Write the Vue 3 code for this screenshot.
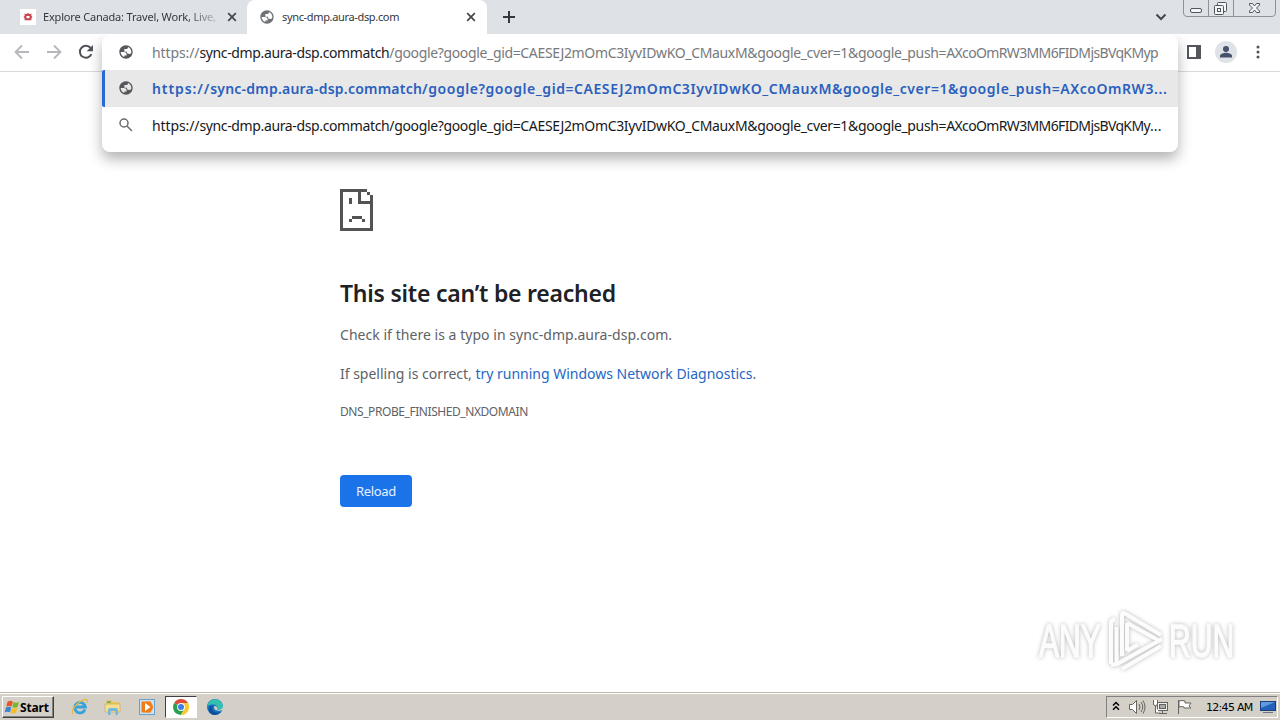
<template>
    <div class="screen">
        <header class="tab-strip">
            <div class="tab idle">
                <svg class="favicon" viewBox="0 0 16 16">
                    <rect width="16" height="16" fill="#fff" />
                    <path d="M8 4l1.500 1 2-.2-.2 2L12.500 8l-1.200 1.400.2 1.800H4.500l.2-1.800L3.500 8l1.200-1.200-.2-2 2 .2z" fill="#c94753" />
                    <rect x="6.500" y="7" width="3" height="2.200" fill="#fff" />
                </svg>
                <span class="tab-title fade">Explore Canada: Travel, Work, Live,</span>
                <svg class="close" viewBox="0 0 10 10"><path d="M1.200 1.200l7.600 7.600M8.800 1.200L1.200 8.800" /></svg>
            </div>
            <div class="tab active">
                <svg class="globe" viewBox="0 0 24 24"><path :d="globePath" fill="#6f7276" /></svg>
                <span class="tab-title">sync-dmp.aura-dsp.com</span>
                <svg class="close" viewBox="0 0 10 10"><path d="M1.200 1.200l7.600 7.600M8.800 1.200L1.200 8.800" /></svg>
            </div>
            <svg class="new-tab" viewBox="0 0 12 12"><path d="M6 0v12M0 6h12" /></svg>
            <svg class="tab-search" viewBox="0 0 12 8"><path d="M1.500 1.500L6 6l4.500-4.500" /></svg>
            <svg class="win-buttons" viewBox="0 0 94 18">
                <path d="M.5 0v13q0 3.500 3.500 3.500h85q3.500 0 3.500-3.500V0M25.500 0v16M50.500 0v16" fill="none" stroke="#8e939b" />
                <g fill="#f4f5f7" stroke="#50555e">
                    <rect x="7.500" y="8.500" width="11" height="4" rx="1.500" />
                    <rect x="34.500" y="2.500" width="9" height="9" rx="1" />
                    <rect x="31.500" y="5.500" width="9" height="9" rx="1" />
                    <rect x="34.500" y="8.500" width="3" height="3" />
                    <path d="M66.500 3.500h3l2 2.500 2-2.500h3v1.500l-3 3 3 3v1.500h-3l-2-2.500-2 2.500h-3v-1.500l3-3-3-3z" />
                </g>
            </svg>
        </header>

        <div class="toolbar">
            <svg class="nav back" viewBox="0 0 16 16"><path d="M15 8H2M8 1.500L1.500 8 8 14.500" /></svg>
            <svg class="nav forward" viewBox="0 0 16 16"><path d="M1 8h13M8 1.500L14.500 8 8 14.500" /></svg>
            <svg class="nav reload" viewBox="0 0 16 16">
                <path d="M13.400 10.200A6 6 0 1 1 12.600 4" />
                <path class="solid" d="M15 1v6.300H8.700z" />
            </svg>
            <div class="right-tools">
                <svg class="side-panel" viewBox="0 0 14 14"><path d="M0 0h14v14H0zM2 2v10h7V2z" fill="#53565a" fill-rule="evenodd" /></svg>
                <svg class="profile" viewBox="0 0 22 22">
                    <circle cx="11" cy="11" r="11" fill="#dfe2e7" />
                    <circle cx="11" cy="8" r="3" fill="#47516b" />
                    <path d="M5 16.500v-1.700c0-2 4-3 6-3s6 1 6 3v1.700z" fill="#47516b" />
                </svg>
                <svg class="menu" viewBox="0 0 4 14">
                    <circle cx="2" cy="2" r="1.500" /><circle cx="2" cy="7" r="1.500" /><circle cx="2" cy="12" r="1.500" />
                </svg>
            </div>
        </div>

        <div class="omnibox">
            <div class="row input">
                <svg class="globe" viewBox="0 0 24 24"><path :d="globePath" fill="#54575b" /></svg>
                <span class="url dim"><i>https://</i><b>{{ host }}</b>{{ path }}<em>{{ token }}MM6FIDMjsBVqKMyp</em></span>
            </div>
            <div class="row selected">
                <svg class="globe" viewBox="0 0 24 24"><path :d="globePath" fill="#54575b" /></svg>
                <span class="url strong"><i>https://</i><b>{{ host }}</b>{{ path }}{{ token }}...</span>
            </div>
            <div class="row">
                <svg class="globe lens" viewBox="0 0 16 16"><circle cx="6" cy="6" r="4" /><path d="M9 9l5 5" /></svg>
                <span class="url plain"><i>https://</i><b>{{ host }}</b>{{ path }}<em>{{ token }}MM6FIDMjsBVqKMy</em><u>...</u></span>
            </div>
        </div>

        <main class="page">
            <svg class="sad-page" viewBox="0 0 33 42" shape-rendering="crispEdges">
                <path d="M0 0h27v3H3v36h27V15h3v27H0z" />
                <path d="M18 0h3v12h12v3H18zM27 3h3v3h-3zM30 6h3v9h-3zM9 9h3v6H9zM12 27h10v3H12zM9 30h3v3H9zM22 30h3v3h-3z" />
            </svg>
            <h1>This site can’t be reached</h1>
            <p class="hint">Check if there is a typo in sync-dmp.aura-dsp.com.</p>
            <p class="diagnose">If spelling is correct, <a>try running Windows Network Diagnostics</a>.</p>
            <p class="code">DNS_PROBE_FINISHED_NXDOMAIN</p>
            <button>Reload</button>
        </main>

        <div class="watermark">
            <span>ANY</span>
            <svg viewBox="0 0 58 64">
                <path d="M8 10.500q-4 0-4 3.500v41M9.500 18v36" />
                <path d="M15 47V6q0-3 3-1.500L54 26M20 14v28M20 14l31 17M20 42l11-6.500" />
                <path d="M4 56l6-1 45-25M15 60l39-23" />
            </svg>
            <span>RUN</span>
        </div>

        <footer class="taskbar">
            <div class="start">
                <svg viewBox="0 0 18 16">
                    <path d="M4 2q3-2 6 0L8.500 7.500q-3-1.500-6 0z" fill="#e8572a" />
                    <path d="M10.800 2.500q3 1.500 6 0L15.300 8q-3 1.500-6 0z" fill="#76b82a" />
                    <path d="M2.200 8.500q3-1.500 6 0L6.800 14q-3-1.500-6 0z" fill="#3c83d4" />
                    <path d="M9 9q3 1.500 6 0l-1.500 5.500q-3 1.500-6 0z" fill="#f7bd23" />
                </svg>
                <span>Start</span>
            </div>
            <svg class="app ie" viewBox="0 0 18 18">
                <path d="M14 11.500A5.300 5.300 0 1 1 14.300 9H5" fill="none" stroke="#35a2de" stroke-width="2.800" />
                <path d="M2 16C-1 14 5 5 12 2c4-1.500 5 0 4 3" fill="none" stroke="#e8b73c" stroke-width="1.300" />
            </svg>
            <svg class="app explorer" viewBox="0 0 18 18">
                <path d="M2 4l1-2h5l1 2h7v9H2z" fill="#e9c862" />
                <path d="M1 6h15v8H1z" fill="#f6df91" stroke="#c9a54b" stroke-width=".6" />
                <path d="M4 17v-5q0-2 2-2h6q2 0 2 2v5h-2.500v-4h-5v4z" fill="#72b7df" />
                <path d="M3 4h4" stroke="#5aa768" stroke-width="1.500" />
            </svg>
            <svg class="app player" viewBox="0 0 18 18">
                <rect x="1.500" y="1.500" width="15" height="15" fill="#cce3f4" stroke="#68a1cc" />
                <rect x="3.500" y="3.500" width="9.500" height="11" fill="#f07d18" />
                <circle cx="9.500" cy="9" r="5.500" fill="#f07d18" />
                <path d="M7 5v8l5.500-4z" fill="#fff" />
            </svg>
            <div class="app-open">
                <svg viewBox="0 0 16 16">
                    <path d="M8 8L1.100 4A8 8 0 0 1 15 4.100H8z" fill="#e04a3a" />
                    <path d="M8 8L1.100 4A8 8 0 0 0 7.800 16l3.700-6z" fill="#2b9f50" />
                    <path d="M8 4.100h7A8 8 0 0 1 7.800 16l3.700-6z" fill="#f8c82c" />
                    <circle cx="8" cy="8" r="3.900" fill="#fff" />
                    <circle cx="8" cy="8" r="3" fill="#3e7de5" />
                </svg>
            </div>
            <svg class="app edge" viewBox="0 0 18 18">
                <circle cx="9" cy="9" r="8" fill="#1676c5" />
                <path d="M1.200 8a8 8 0 0 1 15.700-.5c.8 4-3 5.500-6 4 1.200-2.500-.3-5-3.500-5C4.500 6.500 2 7 1.200 8z" fill="#35bfb0" />
                <path d="M7 7.500c-2 3 0 8.500 7.500 6.500-3 4-10 4-11.500-1C2 9.500 4.500 7 7 7.500z" fill="#124f9b" />
                <path d="M8.500 8c-1.500 3 1.500 5.500 6.500 4.500l2.500-.5-.5-3c-1 2.500-4 3.500-6 2.500.8-1.500 0-3.500-2.500-3.500z" fill="#d4d0c8" />
            </svg>

            <div class="tray">
                <svg class="chevrons" viewBox="0 0 8 10"><path d="M1 4.500l3-3 3 3M1 8.800l3-3 3 3" /></svg>
                <svg class="speaker" viewBox="0 0 18 16">
                    <path d="M1.500 5.500h3l4-4v13l-4-4h-3z" fill="#fff" />
                    <path d="M11 5q2 3 0 6M13 3q3.500 5 0 10M15 1.500q4 6.500 0 13" fill="none" />
                </svg>
                <svg class="network" viewBox="0 0 18 16">
                    <rect x="5.500" y="3.500" width="10" height="8" fill="#eee" />
                    <rect x="7.500" y="5.500" width="6" height="4" fill="#aaa" />
                    <path d="M7 14.500h8M10.500 12v2M1.500 1v4q0 1.500 2 1.500t2-1.500V1M3.500 7v7h4" fill="#fff" />
                </svg>
                <svg class="flag" viewBox="0 0 18 16">
                    <path d="M2.500 1v14M3 2q3-1 6 0v2h6l-2 3 2 2H8V8Q6 7 3 8z" fill="#fff" />
                </svg>
                <span class="clock">12:45 AM</span>
                <svg class="desktop" viewBox="0 0 16 14">
                    <rect x=".5" y="1.500" width="15" height="9" fill="#245fba" stroke="#183f7d" />
                    <path d="M1 2h14L1 8z" fill="#609be0" />
                    <path d="M3 12.500h10" stroke="#6b7585" />
                </svg>
            </div>
        </footer>
    </div>
</template>

<script setup>
const host = 'sync-dmp.aura-dsp.commatch'
const path = '/google?google_gid=CAESEJ2mOmC3IyvIDwKO_CMauxM&google_cver=1&google_push='
const token = 'AXcoOmRW3'

const globePath = 'M12 2C6.480 2 2 6.480 2 12s4.480 10 10 10 10-4.480 10-10S17.520 2 12 2zM4 12h4.400c3.400 0 4.900 1.700 4.600 5.100H9.500v2.500C6.100 18.500 4 15.300 4 12zM20 12c0 .3 0 .6-.1 1-.6 1.300-1.700 2-3.300 2-2.200 0-3.300-1.100-3.300-3.300H9.500V7.500h3.300c1.500 0 2.200-.9 2.200-2.900C18 5.900 20 8.700 20 12z'
</script>

<style>
body {
    margin: 0;
    overflow: hidden;
}
</style>

<style scoped>
.screen {
    position: relative;
    display: flex;
    flex-direction: column;
    width: 1280px;
    height: 720px;
    overflow: hidden;
    background: #fff;
    font-family: "Noto Sans", "Open Sans", sans-serif;
}

svg {
    display: block;
    flex-shrink: 0;
}

/* ===== tabs ===== */

.tab-strip {
    display: flex;
    height: 34px;
    background: #dee1e6;
}

.tab {
    display: flex;
    align-items: center;
    box-sizing: border-box;
    height: 34px;
}

.idle {
    width: 247px;
    padding-left: 20px;
}

.active {
    width: 240px;
    padding-left: 12px;
    background: #fff;
    border-radius: 8px 8px 0 0;
}

.favicon {
    width: 16px;
    height: 16px;
    margin-right: 7px;
}

.tab-title {
    width: 175px;
    white-space: nowrap;
    color: #35383c;
    font-size: 11px;
    line-height: 16px;
    letter-spacing: -.34px;
}

.active .tab-title {
    margin-right: 9px;
    margin-left: 7px;
}

.fade {
    margin-right: 9px;
    letter-spacing: -.18px;
    mask-image: linear-gradient(90deg, #000 145px, transparent 180px);
}

.close {
    width: 10px;
    height: 10px;
    fill: none;
    stroke: #43464b;
    stroke-width: 1.7;
}

.globe {
    width: 16px;
    height: 16px;
}

.new-tab {
    width: 12px;
    height: 12px;
    margin: 11px 0 0 16px;
    stroke: #35383d;
    stroke-width: 2;
}

.tab-search {
    width: 12px;
    height: 8px;
    margin: 13px 16px 0 auto;
    fill: none;
    stroke: #44474c;
    stroke-width: 2;
}

.win-buttons {
    width: 94px;
    height: 18px;
    margin-right: 3px;
}

/* ===== toolbar ===== */

.toolbar {
    display: flex;
    align-items: center;
    box-sizing: border-box;
    height: 38px;
    padding: 0 0 1px 14px;
    border-bottom: 1px solid #d8dadd;
}

.nav {
    width: 16px;
    height: 16px;
    margin-right: 16px;
    fill: none;
    stroke: #b5b7ba;
    stroke-width: 1.8;
}

.reload {
    stroke: #505358;
    stroke-width: 2;
}

.solid {
    fill: #505358;
    stroke: none;
}

.right-tools {
    display: flex;
    align-items: center;
    margin-left: auto;
    padding-right: 20px;
}

.side-panel {
    width: 14px;
    height: 14px;
    margin-right: 14px;
}

.profile {
    width: 22px;
    height: 22px;
    margin-right: 19px;
}

.menu {
    width: 4px;
    height: 14px;
    fill: #505358;
}

/* the suggestion list hangs over the toolbar and page */
.omnibox {
    position: absolute;
    top: 35px;
    left: 102px;
    width: 1076px;
    height: 117px;
    background: #fff;
    border-radius: 8px;
    box-shadow: 0 7px 14px rgba(0, 0, 0, .3);
    clip-path: inset(0 -30px -30px -30px);
}

.row {
    display: flex;
    align-items: center;
    box-sizing: border-box;
    height: 37px;
    padding-left: 16px;
}

.row .globe {
    margin-bottom: 2px;
}

.row.input {
    height: 35px;
}

.selected {
    padding-left: 13px;
    background: #e8e8e8;
    border-left: 3px solid #2869d6;
    border-radius: 2px 0 0 2px;
}

.url {
    margin-left: 18px;
    white-space: nowrap;
    color: #17181a;
    font-size: 14px;
    line-height: 20px;
}

.url i,
.url b,
.url em,
.url u {
    font-style: normal;
    font-weight: inherit;
    text-decoration: none;
}

.dim {
    color: #77797c;
}

.dim b {
    color: #202124;
}

.dim,
.plain {
    letter-spacing: -.35px;
}

.dim i,
.plain i {
    letter-spacing: -.1px;
}

.dim b,
.plain b {
    letter-spacing: -.37px;
}

.dim em,
.plain em {
    letter-spacing: -.64px;
}

.plain u {
    letter-spacing: .1px;
}

.strong {
    color: #2b5fbe;
    font-weight: 600;
    letter-spacing: .56px;
}

.strong i {
    letter-spacing: .9px;
}

.strong b {
    letter-spacing: .22px;
}

.lens {
    fill: none;
    stroke: #696c70;
    stroke-width: 1.5;
}

/* ===== error page ===== */

.page {
    display: flex;
    flex: 1;
    flex-direction: column;
    align-items: flex-start;
    padding: 117px 0 0 340px;
    color: #606266;
}

.sad-page {
    width: 33px;
    height: 42px;
    fill: #535353;
}

h1 {
    margin: 46px 0 0;
    color: #202124;
    font-size: 23px;
    font-weight: 600;
    line-height: 33px;
    letter-spacing: -.23px;
    white-space: nowrap;
}

p {
    margin: 0;
    font-size: 14px;
    line-height: 20px;
    white-space: nowrap;
}

.hint {
    margin-top: 15px;
    letter-spacing: .04px;
}

.diagnose {
    margin-top: 19px;
    letter-spacing: -.01px;
}

a {
    color: #2467c5;
}

.code {
    margin-top: 18px;
    font-size: 12px;
    letter-spacing: -.43px;
}

button {
    width: 72px;
    height: 32px;
    margin-top: 53px;
    padding: 0;
    color: #e8f1ff;
    font: 13px "Noto Sans", sans-serif;
    letter-spacing: -.3px;
    background: #1a73e8;
    border: 0;
    border-radius: 4px;
}

.watermark {
    position: absolute;
    top: 608px;
    left: 1039px;
    display: flex;
    align-items: center;
    gap: 4px;
    color: #fcfcfc;
    font: 400 47px/66px "Liberation Sans", sans-serif;
    filter: drop-shadow(0 0 2px rgba(0, 0, 0, .28));
}

.watermark span {
    width: 64px;
    transform: scaleX(.64);
    transform-origin: left;
    -webkit-text-stroke: 1.5px #fcfcfc;
}

.watermark svg {
    width: 58px;
    height: 64px;
    fill: none;
    stroke: #fcfcfc;
    stroke-width: 4;
    stroke-linejoin: round;
}

/* ===== taskbar ===== */

.taskbar {
    display: flex;
    align-items: center;
    box-sizing: border-box;
    height: 28px;
    padding: 1px 2px 0;
    background: #d4d0c8;
    border-top: 1px solid #bcb9b3;
    box-shadow: inset 0 1px #fff;
}

.start {
    display: flex;
    align-items: center;
    box-sizing: border-box;
    width: 52px;
    height: 22px;
    padding-left: 1px;
    color: #000;
    font: 700 12px "Noto Sans", sans-serif;
    letter-spacing: -.15px;
    border: 1px solid;
    border-color: #fff #404040 #404040 #fff;
    box-shadow: inset -1px -1px #808080;
}

.start svg {
    width: 16px;
    height: 16px;
}

.app {
    width: 18px;
    height: 18px;
}

.ie {
    margin-left: 17px;
}

.explorer {
    margin-left: 15px;
}

.player {
    margin-left: 16px;
}

.app-open {
    display: flex;
    align-items: center;
    justify-content: center;
    box-sizing: border-box;
    width: 32px;
    height: 22px;
    margin-left: 9px;
    background: #fff;
    border: 1px solid;
    border-color: #404040 #fff #fff #404040;
}

.app-open svg {
    width: 16px;
    height: 16px;
}

.edge {
    margin-left: 9px;
}

.tray {
    display: flex;
    align-items: center;
    box-sizing: border-box;
    width: 172px;
    height: 22px;
    margin-left: auto;
    padding-left: 5px;
    border: 1px solid;
    border-color: #808080 #fff #fff #808080;
}

.chevrons {
    width: 8px;
    height: 10px;
    margin-bottom: 2px;
    fill: none;
    stroke: #000;
    stroke-width: 1.5;
}

.speaker,
.network,
.flag {
    width: 18px;
    height: 16px;
    stroke: #66645f;
    stroke-width: 1;
}

.speaker {
    margin-left: 8px;
}

.network {
    margin-left: 6px;
}

.flag {
    margin-left: 6px;
}

.clock {
    width: 47px;
    margin-left: 12px;
    color: #000;
    font: 11px "DejaVu Sans", sans-serif;
    letter-spacing: -.7px;
    white-space: nowrap;
}

.desktop {
    width: 16px;
    height: 14px;
    margin-left: 7px;
}
</style>
